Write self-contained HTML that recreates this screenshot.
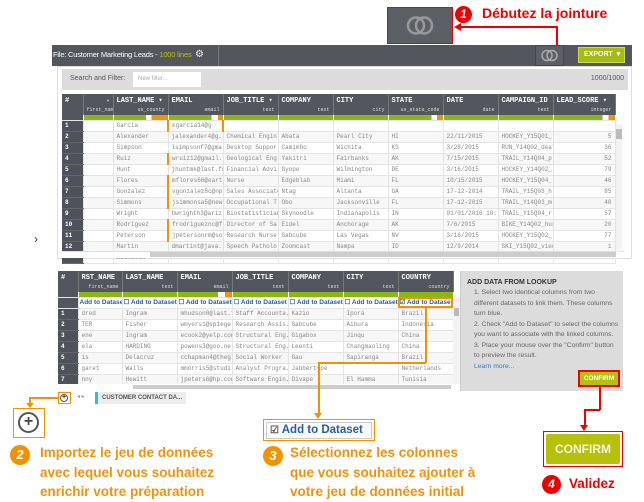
<!DOCTYPE html>
<html><head><meta charset="utf-8"><style>
*{margin:0;padding:0;box-sizing:border-box}
body{width:644px;height:502px;background:#fff;position:relative;overflow:hidden;font-family:"Liberation Sans",sans-serif}
.a{position:absolute;white-space:nowrap}
table{border-collapse:collapse;table-layout:fixed;position:absolute}
td{overflow:hidden;white-space:nowrap;font-family:"Liberation Mono",monospace;font-size:6px;color:#888;padding:0 3px;border-right:1px solid #e4e4e4;border-bottom:1px solid #e4e4e4;height:10.9px;line-height:10px}
td.n{background:#4e535b;color:#fff;font-weight:bold;border-bottom:1px solid #666}
tr:nth-child(even) td:not(.n){background:#f7f7f7}
.h td{background:#52565e;color:#fff;font-weight:bold;font-size:7px;line-height:9px;vertical-align:top;padding-top:3px;border-right:1px solid #777;border-bottom:none}
.h td small{display:block;text-align:right;font-size:5px;font-weight:normal;color:#ddd}
.g td{background:#8ab715 !important;height:5px;border-right:1px solid #fff;padding:0}
.ad td{background:#fff !important;font-family:"Liberation Sans",sans-serif;font-size:6.5px;color:#2a5d9f;font-weight:bold;height:10px;padding:0 1px}
.or{background:#f39200}
.rd{background:#e00}
.ot{font-weight:bold;color:#f0920f;font-size:13.5px;line-height:19.5px}
.circ{border-radius:50%;color:#fff;font-weight:bold;text-align:center;font-style:italic}
</style></head><body>

<div class="a" style="left:387px;top:7px;width:66px;height:37px;border:1.5px solid #e00;background:#5c5f66"></div>
<svg class="a" style="left:404px;top:12px" width="32" height="27"><circle cx="12" cy="13.5" r="8" fill="none" stroke="#999" stroke-width="2.5"/><circle cx="20" cy="13.5" r="8" fill="none" stroke="#999" stroke-width="2.5"/></svg>
<div class="a circ rd" style="left:455px;top:6px;width:17px;height:17px;font-size:12px;line-height:17px">1</div>
<div class="a" style="left:482px;top:5px;font-weight:bold;color:#e00;font-size:14px">Débutez la jointure</div>
<div class="a rd" style="left:556px;top:26px;width:1.5px;height:20px"></div>
<div class="a rd" style="left:460px;top:26px;width:97px;height:1.5px"></div>
<div class="a" style="left:454px;top:23px;width:0;height:0;border-top:4px solid transparent;border-bottom:4px solid transparent;border-right:7px solid #e00"></div>

<div class="a" style="left:52px;top:45px;width:580px;height:21px;background:#53565d"></div>
<div class="a" style="left:53px;top:50px;font-size:7.5px;color:#fff;letter-spacing:-0.2px">File: Customer Marketing Leads - <span style="color:#b5c10a">1000 lines</span></div>
<div class="a" style="left:195px;top:49px;color:#eee;font-size:10px">⚙</div>
<div class="a" style="left:218px;top:45px;width:1px;height:21px;background:#777"></div>
<div class="a" style="left:535px;top:45px;width:29px;height:21px;border:1.5px solid #e00;background:#5c5f66"></div>
<svg class="a" style="left:539px;top:48px" width="22" height="15"><circle cx="8" cy="7.5" r="5" fill="none" stroke="#aaa" stroke-width="1.5"/><circle cx="13" cy="7.5" r="5" fill="none" stroke="#aaa" stroke-width="1.5"/></svg>
<div class="a" style="left:578px;top:47px;width:47px;height:16px;background:#a5bb14;border:1px solid #c8d860;color:#fff;font-size:7px;font-weight:bold;line-height:14px;padding-left:5px">EXPORT &nbsp;▾</div>

<div class="a" style="left:57px;top:66px;width:575px;height:193px;background:#fff;border:1px solid #ddd"></div>
<div class="a" style="left:62px;top:69px;width:566px;height:21px;background:#dcdcdc"></div>
<div class="a" style="left:70px;top:75px;font-size:7px;color:#555">Search and Filter:</div>
<div class="a" style="left:133px;top:72px;width:68px;height:15px;background:#fff;font-size:6px;color:#aaa;padding:4px 5px">New filter...</div>
<div class="a" style="right:20px;top:75px;font-size:7px;color:#555">1000/1000</div>
<div class="a" style="left:34px;top:232px;font-size:12px;color:#333">›</div>

<table style="left:62px;top:94px;width:553px">
<colgroup><col style="width:21px"><col style="width:30px"><col style="width:55px"><col style="width:55px"><col style="width:55px"><col style="width:55px"><col style="width:55px"><col style="width:55px"><col style="width:55px"><col style="width:55px"><col style="width:62px"></colgroup>
<tr class="h" style="height:20px"><td>#</td><td><small>▾</small><small>first_name</small></td><td>LAST_NAME ▾<small>us_county</small></td><td>EMAIL<small>email</small></td><td>JOB_TITLE ▾<small>text</small></td><td>COMPANY<small>text</small></td><td>CITY<small>city</small></td><td>STATE<small>us_state_code</small></td><td>DATE<small>date</small></td><td>CAMPAIGN_ID ▾<small>text</small></td><td>LEAD_SCORE ▾<small>integer</small></td></tr>
<tr class="g"><td style="background:#52565e!important"></td><td></td><td style="background:linear-gradient(90deg,#8ab715 60%,#fff 60%,#fff 70%,#f39200 70%)!important"></td><td style="background:linear-gradient(90deg,#8ab715 80%,#fff 80%,#fff 92%,#f39200 92%)!important"></td><td></td><td></td><td></td><td style="background:linear-gradient(90deg,#8ab715 80%,#fff 80%,#fff 90%,#f39200 90%)!important"></td><td></td><td></td><td style="background:linear-gradient(90deg,#8ab715 80%,#fff 80%,#fff 90%,#f39200 90%)!important"></td></tr>
<tr><td class="n">1</td><td></td><td style="border-right:2px solid #f39200">Garcia</td><td style="border-right:2px solid #f39200">kgarcia14@g</td><td></td><td></td><td></td><td></td><td></td><td></td><td></td></tr>
<tr><td class="n">2</td><td></td><td>Alexander</td><td>jalexander4@g...</td><td>Chemical Engin...</td><td>Abata</td><td>Pearl City</td><td>HI</td><td>22/11/2015</td><td>HOCKEY_Y15Q01_...</td><td style="text-align:right">5</td></tr>
<tr><td class="n">3</td><td></td><td>Simpson</td><td>lsimpsonf7@gma...</td><td>Desktop Suppor...</td><td>Camimbo</td><td>Wichita</td><td>KS</td><td>3/28/2015</td><td>RUN_Y14Q02_deal</td><td style="text-align:right">36</td></tr>
<tr><td class="n">4</td><td></td><td style="border-right:2px solid #f39200">Ruiz</td><td>wruiz12@gmail...</td><td>Geological Eng...</td><td>Yakitri</td><td>Fairbanks</td><td>AK</td><td>7/15/2015</td><td>TRAIL_Y14Q04_p...</td><td style="text-align:right">52</td></tr>
<tr><td class="n">5</td><td></td><td>Hunt</td><td>jhuntmk@last.fm</td><td>Financial Advi...</td><td>Gyope</td><td>Wilmington</td><td>DE</td><td>3/16/2015</td><td>HOCKEY_Y14Q02_...</td><td style="text-align:right">79</td></tr>
<tr><td class="n">6</td><td></td><td style="border-right:2px solid #f39200">Flores</td><td>mflores66@eart...</td><td>Nurse</td><td>Edgeblab</td><td>Miami</td><td>FL</td><td>10/15/2015</td><td>HOCKEY_Y15Q04_...</td><td style="text-align:right">46</td></tr>
<tr><td class="n">7</td><td></td><td style="border-right:2px solid #f39200">Gonzalez</td><td>vgonzalez8c@np...</td><td>Sales Associate</td><td>Ntag</td><td>Altanta</td><td>GA</td><td>17-12-2014</td><td>TRAIL_Y15Q03_h...</td><td style="text-align:right">85</td></tr>
<tr><td class="n">8</td><td></td><td style="border-right:2px solid #f39200">Simmons</td><td>jsimmonsa5@new...</td><td>Occupational T...</td><td>Obo</td><td>Jacksonville</td><td>FL</td><td>17-12-2015</td><td>TRAIL_Y14Q03_m...</td><td style="text-align:right">40</td></tr>
<tr><td class="n">9</td><td></td><td>Wright</td><td>bwrighth3@ariz...</td><td>Biostatistician</td><td>Skynoodle</td><td>Indianapolis</td><td>IN</td><td>01/01/2016 10:...</td><td>TRAIL_Y15Q04_r...</td><td style="text-align:right">57</td></tr>
<tr><td class="n">10</td><td></td><td style="border-right:2px solid #f39200">Rodriguez</td><td>frodrigueznc@f...</td><td>Director of Sa...</td><td>Eidel</td><td>Anchorage</td><td>AK</td><td>7/6/2015</td><td>BIKE_Y14Q02_hurt</td><td style="text-align:right">20</td></tr>
<tr><td class="n">11</td><td></td><td style="border-right:2px solid #f39200">Peterson</td><td>jpetersonrm@so...</td><td>Research Nurse</td><td>Gabcube</td><td>Las Vegas</td><td>NV</td><td>3/16/2015</td><td>HOCKEY_Y15Q02_...</td><td style="text-align:right">77</td></tr>
<tr><td class="n">12</td><td></td><td>Martin</td><td>dmartint@java...</td><td>Speech Patholo...</td><td>Zoomcast</td><td>Nampa</td><td>ID</td><td>12/9/2014</td><td>SKI_Y15Q02_vied</td><td style="text-align:right">1</td></tr>
<tr style="height:6px"><td class="n"></td><td></td><td>Sullivan</td><td></td><td></td><td></td><td></td><td></td><td></td><td></td><td></td></tr>
</table>
<div class="a" style="left:62px;top:251px;width:562px;height:7px;background:#fff;border-top:1px solid #ddd"></div>
<div class="a" style="left:150px;top:252px;width:466px;height:5px;background:#ccc"></div>
<div class="a" style="left:616px;top:124px;width:6px;height:128px;background:#f3f3f3"></div>
<div class="a" style="left:616px;top:129px;width:6px;height:10px;background:#bbb"></div>

<table style="left:58px;top:271px;width:395px">
<colgroup><col style="width:20px"><col style="width:44px"><col style="width:55px"><col style="width:55px"><col style="width:56px"><col style="width:55px"><col style="width:55px"><col style="width:55px"></colgroup>
<tr class="h" style="height:21px"><td>#</td><td>RST_NAME<small>first_name</small></td><td>LAST_NAME<small>text</small></td><td>EMAIL<small>email</small></td><td>JOB_TITLE<small>text</small></td><td>COMPANY<small>text</small></td><td>CITY<small>text</small></td><td>COUNTRY<small>country</small></td></tr>
<tr class="g"><td style="background:#52565e!important"></td><td></td><td></td><td style="background:linear-gradient(90deg,#8ab715 75%,#fff 75%,#fff 88%,#f39200 88%)!important"></td><td></td><td></td><td></td><td></td></tr>
<tr class="ad"><td style="background:#52565e!important"></td><td>Add to Dataset</td><td>☐ Add to Dataset</td><td>☐ Add to Dataset</td><td>☐ Add to Dataset</td><td>☐ Add to Dataset</td><td>☐ Add to Dataset</td><td style="outline:2px solid #f39200;outline-offset:-2px">☑ Add to Dataset</td></tr>
<tr><td class="n">1</td><td>dred</td><td>Ingram</td><td>mhudson0@last.fm</td><td>Staff Accounta...</td><td>Kazio</td><td>Iporá</td><td>Brazil</td></tr>
<tr><td class="n">2</td><td>TER</td><td>Fisher</td><td>wmyers1@sp1ege...</td><td>Research Assis...</td><td>Gabcube</td><td>Aibura</td><td>Indonesia</td></tr>
<tr><td class="n">3</td><td>ene</td><td>Ingram</td><td>ecook2@yelp.com</td><td>Structural Eng...</td><td>Gigabox</td><td>Jinqu</td><td>China</td></tr>
<tr><td class="n">4</td><td>ela</td><td>HARDING</td><td>powens3@goo.ne...</td><td>Structural Eng...</td><td>Leenti</td><td>Changmaoling</td><td>China</td></tr>
<tr><td class="n">5</td><td>is</td><td>Delacruz</td><td>cchapman4@theg...</td><td>Social Worker</td><td>Gau</td><td>Sapiranga</td><td>Brazil</td></tr>
<tr><td class="n">6</td><td>garet</td><td>Walls</td><td>mmorris5@studi...</td><td>Analyst Progra...</td><td>Jabbertype</td><td></td><td>Netherlands</td></tr>
<tr><td class="n">7</td><td>nny</td><td>Hewitt</td><td>jpeters6@hp.com</td><td>Software Engin...</td><td>Divape</td><td>El Hamma</td><td>Tunisia</td></tr>
</table>
<div class="a" style="left:58px;top:384px;width:402px;height:6px;background:#fff"></div>
<div class="a" style="left:133px;top:385px;width:318px;height:4px;background:#ccc"></div>
<div class="a" style="left:453px;top:297px;width:7px;height:87px;background:#f3f3f3"></div>
<div class="a" style="left:454px;top:308px;width:5px;height:8px;background:#bbb"></div>

<div class="a" style="left:460px;top:271px;width:163px;height:120px;background:#dcdcdc;border-left:1px solid #ccc"></div>
<div class="a" style="left:467px;top:279px;font-size:7px;font-weight:bold;color:#333">ADD DATA FROM LOOKUP</div>
<div class="a" style="left:474px;top:288px;width:146px;font-size:6.8px;line-height:10.5px;color:#666;white-space:normal">1. Select two identical columns from two different datasets to link them. These columns turn blue.<br>2. Check "Add to Dataset" to select the columns you want to associate with the linked columns.<br>3. Place your mouse over the "Confirm" button to preview the result.<br><span style="color:#3a78c4">Learn more...</span></div>
<div class="a" style="left:578px;top:370px;width:42px;height:17px;border:2px solid #e00;background:#b5c10a;color:#fff;font-size:6.5px;font-weight:bold;text-align:center;line-height:13px">CONFIRM</div>

<div class="a" style="left:58px;top:392px;width:13px;height:12px;border:1.5px solid #f39200;background:#fff"></div>
<div class="a" style="left:60px;top:394px;width:8px;height:8px;border:1px solid #555;border-radius:50%;font-size:7px;line-height:6px;text-align:center;color:#333;font-weight:bold">+</div>
<div class="a" style="left:77px;top:393px;font-size:6px;color:#999">◂ ▸</div>
<div class="a" style="left:95px;top:392px;width:3px;height:12px;background:#3cb6e3"></div>
<div class="a" style="left:98px;top:392px;width:88px;height:12px;background:#ececec;font-size:6px;font-weight:bold;color:#555;padding:3px 4px;overflow:hidden">CUSTOMER CONTACT DA...</div>

<div class="a or" style="left:29px;top:397px;width:29px;height:1.5px"></div>
<div class="a or" style="left:29px;top:397px;width:1.5px;height:7px"></div>
<div class="a" style="left:26px;top:403px;border-left:4px solid transparent;border-right:4px solid transparent;border-top:5px solid #f39200"></div>
<div class="a" style="left:13px;top:408px;width:32px;height:30px;border:1.5px solid #f39200"></div>
<div class="a" style="left:18px;top:412px;width:21px;height:21px;border:2px solid #555;border-radius:50%;text-align:center;font-size:16px;line-height:16px;font-weight:bold;color:#444">+</div>
<div class="a circ or" style="left:10px;top:445px;width:20px;height:20px;font-size:13px;line-height:20px">2</div>
<div class="a ot" style="left:40px;top:443px">Importez le jeu de données<br>avec lequel vous souhaitez<br>enrichir votre préparation</div>

<div class="a or" style="left:425px;top:307px;width:1.5px;height:56px"></div>
<div class="a or" style="left:318px;top:362px;width:108px;height:1.5px"></div>
<div class="a or" style="left:318px;top:362px;width:1.5px;height:52px"></div>
<div class="a" style="left:314px;top:413px;border-left:4px solid transparent;border-right:4px solid transparent;border-top:6px solid #f39200"></div>
<div class="a" style="left:263px;top:419px;width:112px;height:22px;border:1.5px solid #f39200;background:#fff"></div>
<div class="a" style="left:266px;top:422px;width:106px;height:17px;border:1px solid #ccc;background:#fafafa;font-size:11.5px;font-weight:bold;color:#2a5d9f;line-height:15px;padding-left:3px"><span style="color:#555;font-size:10px">☑</span> Add to Dataset</div>
<div class="a circ or" style="left:263px;top:446px;width:20px;height:20px;font-size:13px;line-height:20px">3</div>
<div class="a ot" style="left:290px;top:443px">Sélectionnez les colonnes<br>que vous souhaitez ajouter à<br>votre jeu de données initial</div>

<div class="a rd" style="left:599px;top:387px;width:1.5px;height:23px"></div>
<div class="a rd" style="left:584px;top:409px;width:16px;height:1.5px"></div>
<div class="a rd" style="left:584px;top:409px;width:1.5px;height:17px"></div>
<div class="a" style="left:580px;top:425px;border-left:4px solid transparent;border-right:4px solid transparent;border-top:6px solid #e00"></div>
<div class="a" style="left:543px;top:431px;width:80px;height:36px;border:1.5px solid #e00;background:#fff"></div>
<div class="a" style="left:546px;top:434px;width:74px;height:30px;background:#b5c10a;border-radius:2px;color:#f4f4e0;font-size:12px;font-weight:bold;text-align:center;line-height:30px">CONFIRM</div>
<div class="a circ rd" style="left:542px;top:475px;width:19px;height:19px;font-size:12px;line-height:19px">4</div>
<div class="a" style="left:569px;top:476px;font-weight:bold;color:#e00;font-size:13.5px">Validez</div>
</body></html>
